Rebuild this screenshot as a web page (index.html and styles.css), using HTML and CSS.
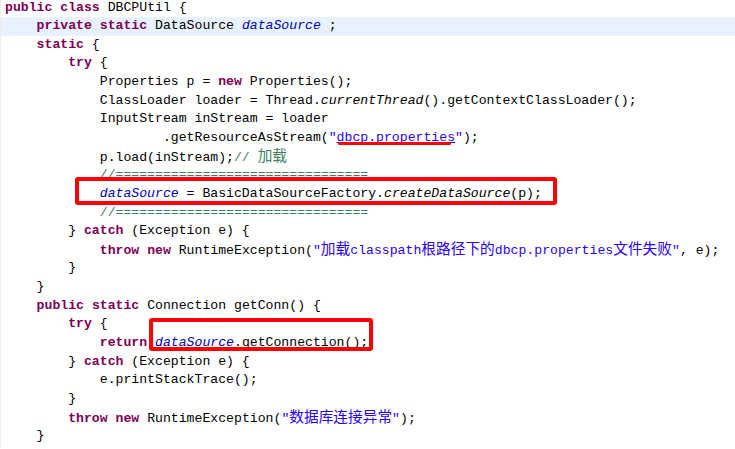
FILE: index.html
```html
<!DOCTYPE html>
<html lang="zh-CN">
<head>
<meta charset="utf-8">
<title>DBCPUtil</title>
<link rel="stylesheet" href="styles.css">
</head>
<body>
<div class="editor">
<div class="code">
<div class="line"><span class="kw">public</span> <span class="kw">class</span> DBCPUtil {</div>
<div class="line current">    <span class="kw">private</span> <span class="kw">static</span> DataSource <span class="field">dataSource</span> ;</div>
<div class="line">    <span class="kw">static</span> {</div>
<div class="line">        <span class="kw">try</span> {</div>
<div class="line">            Properties p = <span class="kw">new</span> Properties();</div>
<div class="line">            ClassLoader loader = Thread.<span class="static">currentThread</span>().getContextClassLoader();</div>
<div class="line">            InputStream inStream = loader</div>
<div class="line">                    .getResourceAsStream(<span class="str">"<span class="link">dbcp.properties</span>"</span>);</div>
<div class="line">            p.load(inStream);<span class="cmt">// <span class="cjk">加载</span></span></div>
<div class="line">            <span class="cmt">//================================</span></div>
<div class="line">            <span class="field">dataSource</span> = BasicDataSourceFactory.<span class="static">createDataSource</span>(p);</div>
<div class="line">            <span class="cmt">//================================</span></div>
<div class="line">        } <span class="kw">catch</span> (Exception e) {</div>
<div class="line">            <span class="kw">throw</span> <span class="kw">new</span> RuntimeException(<span class="str">"<span class="cjk">加载</span>classpath<span class="cjk">根路径下的</span>dbcp.properties<span class="cjk">文件失败</span>"</span>, e);</div>
<div class="line">        }</div>
<div class="line">    }</div>
<div class="line">    <span class="kw">public</span> <span class="kw">static</span> Connection getConn() {</div>
<div class="line">        <span class="kw">try</span> {</div>
<div class="line">            <span class="kw">return</span> <span class="field">dataSource</span>.getConnection();</div>
<div class="line">        } <span class="kw">catch</span> (Exception e) {</div>
<div class="line">            e.printStackTrace();</div>
<div class="line">        }</div>
<div class="line">        <span class="kw">throw</span> <span class="kw">new</span> RuntimeException(<span class="str">"<span class="cjk">数据库连接异常</span>"</span>);</div>
<div class="line">    }</div>
</div>
<div class="mark underline-mark"></div>
<div class="mark box-mark box-one"></div>
<div class="mark box-mark box-two"></div>
</div>
</body>
</html>
```

FILE: styles.css
```css
html, body {
  margin: 0;
  padding: 0;
  background: #ffffff;
}

body {
  width: 735px;
  height: 449px;
  overflow: hidden;
}

.editor {
  position: relative;
  width: 735px;
  height: 449px;
  border-left: 1px solid #ececec;
  box-sizing: border-box;
}

.code {
  margin-top: -1.5px;
  font-family: "Liberation Mono", "Noto Sans CJK SC", monospace;
  font-size: 13.17px;
  color: #000000;
}

.line {
  white-space: pre;
  height: 18.65px;
  line-height: 18.65px;
  padding-left: 4px;
}

.line.current {
  background: #e8f2fe;
}

.kw {
  color: #7f0055;
  font-weight: bold;
}

.field {
  color: #0000c0;
  font-style: italic;
}

.static {
  font-style: italic;
}

.str {
  color: #2a00ff;
}

.link {
  text-decoration: underline;
}

.cmt {
  color: #3f7f5f;
}

.cjk {
  font-family: "Noto Sans CJK SC", sans-serif;
  font-size: 14.7px;
  font-weight: normal;
  line-height: 1;
}

.mark {
  position: absolute;
  box-sizing: border-box;
}

.underline-mark {
  left: 337px;
  top: 143px;
  width: 113px;
  height: 3px;
  background: #ff0000;
  border-radius: 2px;
}

.box-mark {
  border: 4px solid #ff0000;
  border-radius: 3px;
}

.box-one {
  left: 74px;
  top: 178px;
  width: 482px;
  height: 28px;
}

.box-two {
  left: 148px;
  top: 319px;
  width: 224px;
  height: 33px;
}
```
